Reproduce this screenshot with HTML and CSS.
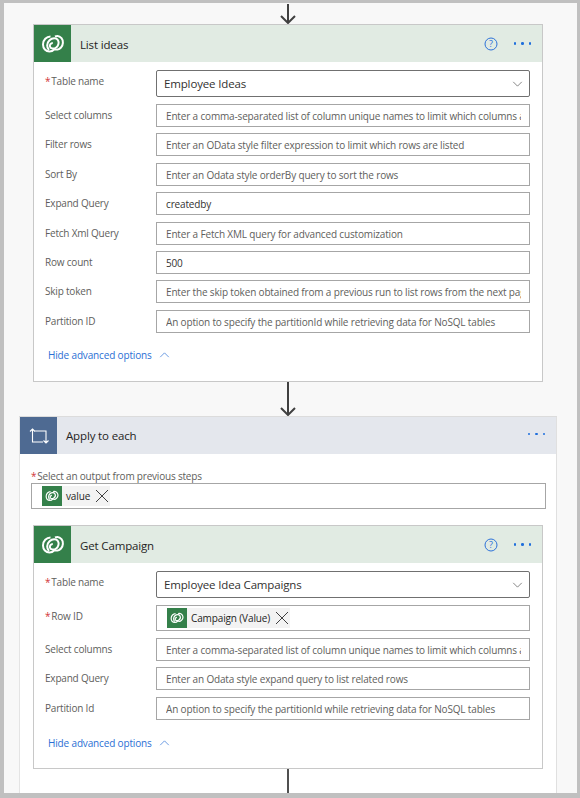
FILE: index.html
```html
<!DOCTYPE html>
<html lang="en">
<head>
    <meta charset="UTF-8">
    <title>List ideas flow</title>
    <link rel="stylesheet" href="styles.css">
</head>
<body>
    <svg class="defs" width="0" height="0">
        <symbol id="dataverse" viewBox="0 0 24 24">
            <path class="dv-line" d="M9.500 4.500C5.500 4.500 2 8 2 12.500c0 4 2.800 7 6.500 7 2.500 0 4-1.300 5-2.300 1.500.8 4.500.5 6.500-1.700 2.300-2.600 2.600-6.700.5-9.300-1.600-2-4.300-2.700-6.500-1.700" />
            <path class="dv-line" d="M8 18c-2.500-2.500-2.500-7 .5-9.800 2.800-2.600 7-2.500 8.500 0 1.300 2.200.5 5.600-1.800 7.300-2.300 1.800-5.500 1.300-6.200-.8-.6-1.800.8-3.700 2.800-3.700" />
        </symbol>
    </svg>

    <div class="frame">
        <div class="connector connector-top">
            <svg class="arrow" viewBox="0 0 20 20"><path class="arrow-line" d="M10 0V19M3 12L10 19L17 12"/></svg>
        </div>

        <section class="card card-list">
            <header class="card-head head-green">
                <span class="head-icon icon-green"><svg class="dv"><use href="#dataverse"/></svg></span>
                <span class="head-title">List ideas</span>
                <svg class="help" viewBox="0 0 14 14"><circle cx="7" cy="7" r="6"/><text x="7" y="10.300" text-anchor="middle">?</text></svg>
                <span class="dots"><i></i><i></i><i></i></span>
            </header>
            <div class="card-body">
                <div class="row row-tall">
                    <label class="lbl"><b>*</b>Table name</label>
                    <div class="field field-select">Employee Ideas<svg class="chev" viewBox="0 0 12 7"><path d="M1 1L6 6L11 1"/></svg></div>
                </div>
                <div class="row"><label class="lbl">Select columns</label><div class="field hint"><span>Enter a comma-separated list of column unique names to limit which columns are listed</span></div></div>
                <div class="row"><label class="lbl">Filter rows</label><div class="field hint"><span>Enter an OData style filter expression to limit which rows are listed</span></div></div>
                <div class="row"><label class="lbl">Sort By</label><div class="field hint"><span>Enter an Odata style orderBy query to sort the rows</span></div></div>
                <div class="row"><label class="lbl">Expand Query</label><div class="field"><span>createdby</span></div></div>
                <div class="row"><label class="lbl">Fetch Xml Query</label><div class="field hint"><span>Enter a Fetch XML query for advanced customization</span></div></div>
                <div class="row"><label class="lbl">Row count</label><div class="field"><span>500</span></div></div>
                <div class="row"><label class="lbl">Skip token</label><div class="field hint"><span>Enter the skip token obtained from a previous run to list rows from the next page</span></div></div>
                <div class="row"><label class="lbl">Partition ID</label><div class="field hint"><span>An option to specify the partitionId while retrieving data for NoSQL tables</span></div></div>
                <a class="adv">Hide advanced options<svg class="chev-up" viewBox="0 0 12 7"><path d="M1 6L6 1L11 6"/></svg></a>
            </div>
        </section>

        <div class="connector connector-mid">
            <svg class="arrow-long" viewBox="0 0 20 34"><path class="arrow-line" d="M10 0V33M3 26L10 33L17 26"/></svg>
        </div>

        <section class="loop">
            <header class="card-head head-slate">
                <span class="head-icon icon-slate">
                    <svg class="loop-icon" viewBox="0 0 20 16"><path d="M3.500 1V14H14M1 3.500L3.500 1L6 3.500M6 3H17V15M14.500 12.500L17 15L19.500 12.500"/></svg>
                </span>
                <span class="head-title">Apply to each</span>
                <span class="dots"><i></i><i></i><i></i></span>
            </header>
            <div class="loop-body">
                <label class="lbl lbl-block"><b>*</b>Select an output from previous steps</label>
                <div class="field field-token">
                    <span class="token">
                        <span class="token-icon"><svg class="dv-small"><use href="#dataverse"/></svg></span>
                        <span class="token-text">value</span>
                        <svg class="token-x" viewBox="0 0 14 14"><path d="M1 1L13 13M13 1L1 13"/></svg>
                    </span>
                </div>

                <section class="card card-get">
                    <header class="card-head head-green">
                        <span class="head-icon icon-green"><svg class="dv"><use href="#dataverse"/></svg></span>
                        <span class="head-title">Get Campaign</span>
                        <svg class="help" viewBox="0 0 14 14"><circle cx="7" cy="7" r="6"/><text x="7" y="10.300" text-anchor="middle">?</text></svg>
                        <span class="dots"><i></i><i></i><i></i></span>
                    </header>
                    <div class="card-body">
                        <div class="row row-tall">
                            <label class="lbl"><b>*</b>Table name</label>
                            <div class="field field-select">Employee Idea Campaigns<svg class="chev" viewBox="0 0 12 7"><path d="M1 1L6 6L11 1"/></svg></div>
                        </div>
                        <div class="row row-id">
                            <label class="lbl"><b>*</b>Row ID</label>
                            <div class="field field-rowid">
                                <span class="token">
                                    <span class="token-icon"><svg class="dv-small"><use href="#dataverse"/></svg></span>
                                    <span class="token-text">Campaign (Value)</span>
                                    <svg class="token-x" viewBox="0 0 14 14"><path d="M1 1L13 13M13 1L1 13"/></svg>
                                </span>
                            </div>
                        </div>
                        <div class="row"><label class="lbl">Select columns</label><div class="field hint"><span>Enter a comma-separated list of column unique names to limit which columns are listed</span></div></div>
                        <div class="row"><label class="lbl">Expand Query</label><div class="field hint"><span>Enter an Odata style expand query to list related rows</span></div></div>
                        <div class="row"><label class="lbl">Partition Id</label><div class="field hint"><span>An option to specify the partitionId while retrieving data for NoSQL tables</span></div></div>
                        <a class="adv">Hide advanced options<svg class="chev-up" viewBox="0 0 12 7"><path d="M1 6L6 1L11 6"/></svg></a>
                    </div>
                </section>

                <div class="connector connector-end"></div>
            </div>
        </section>
    </div>
</body>
</html>
```

FILE: styles.css
```css
* {
    box-sizing: border-box;
}

html, body {
    margin: 0;
    padding: 0;
}

body {
    width: 580px;
    height: 798px;
    overflow: hidden;
    background: #c0c0c0;
    font-family: "Open Sans", "Noto Sans", sans-serif;
    color: #252423;
}

.defs {
    position: absolute;
}

.dv-line {
    fill: none;
    stroke: #fff;
    stroke-width: 2;
}

.frame {
    width: 573px;
    height: 790px;
    margin: 3px 0 0 4px;
    background: #f8f8f8;
    overflow: hidden;
}

/* Connectors */
.connector {
    display: flex;
    justify-content: center;
}

.connector-top {
    width: 568px;
    height: 21px;
    align-items: flex-end;
}

.connector-mid {
    width: 568px;
    height: 34px;
}

.connector-end {
    width: 510px;
    height: 30px;
    margin-left: 13px;
}

.connector-end::before {
    content: "";
    width: 2px;
    height: 30px;
    background: #505050;
}

.arrow {
    width: 20px;
    height: 20px;
}

.arrow-long {
    width: 20px;
    height: 34px;
}

.arrow-line {
    fill: none;
    stroke: #404040;
    stroke-width: 2;
}

/* Cards */
.card {
    width: 510px;
    background: #fff;
    border: 1px solid #c8c8c8;
}

.card-list {
    height: 358px;
    margin-left: 29px;
}

.card-get {
    height: 244px;
    margin-left: 13px;
    margin-top: 16px;
}

.card-get .adv {
    margin-top: 10px;
}

.card-head {
    display: flex;
    align-items: center;
    height: 37px;
}

.head-green {
    background: #e1ebe3;
}

.head-slate {
    background: #e4e7ed;
}

.head-slate .head-title {
    margin-top: -1px;
}

.head-slate .dots {
    margin-top: -3px;
}

.head-icon {
    display: flex;
    align-items: center;
    justify-content: center;
    width: 37px;
    height: 37px;
}

.icon-green {
    background: #34804a;
}

.icon-slate {
    background: #4e6a92;
}

.dv {
    width: 24px;
    height: 24px;
}

.loop-icon {
    width: 20px;
    height: 16px;
    fill: none;
    stroke: #fff;
    stroke-width: 1.100;
}

.head-title {
    flex: 1;
    margin: 2px 0 0 9px;
    font-size: 11.500px;
    letter-spacing: -0.150px;
}

.help {
    width: 14px;
    height: 14px;
    margin-right: 16px;
    fill: none;
    stroke: #2d72d9;
}

.help text {
    font-size: 9px;
    fill: #2d72d9;
    stroke: none;
}

.dots {
    display: flex;
    gap: 5px;
    margin-right: 11px;
}

.dots i {
    width: 2.500px;
    height: 2.500px;
    border-radius: 50%;
    background: #1f6fdc;
}

.card-body {
    padding: 8px 12px 0 11px;
}

/* Form rows */
.row {
    display: flex;
    align-items: flex-start;
    height: 29.400px;
}

.row-tall {
    height: 34px;
}

.row-id {
    height: 33px;
}

.lbl {
    width: 111px;
    padding-top: 4px;
    font-size: 10px;
    letter-spacing: -0.200px;
    color: #605e5c;
    white-space: nowrap;
}

.lbl b {
    color: #d13438;
    font-weight: 400;
    margin-right: 1px;
}

.lbl-block {
    display: block;
    width: auto;
    padding: 0 0 0 11px;
    height: 14px;
    line-height: 14px;
}

.field {
    width: 374px;
    height: 23px;
    padding: 0 8px 0 9px;
    border: 1px solid #a6a6a6;
    background: #fff;
    font-size: 10px;
    letter-spacing: -0.160px;
    line-height: 22px;
    color: #323130;
    white-space: nowrap;
}

.field > span {
    display: block;
    overflow: hidden;
}

.hint {
    color: #605e5c;
}

.field-select {
    display: flex;
    align-items: center;
    justify-content: space-between;
    height: 27px;
    padding: 0 6px 0 7px;
    border-color: #707070;
    border-radius: 2px;
    font-size: 11.500px;
    letter-spacing: -0.150px;
}

.chev {
    width: 11px;
    height: 6px;
    fill: none;
    stroke: #505050;
    stroke-width: 0.800;
}

.field-rowid {
    height: 26px;
    padding: 2px 10px;
    line-height: normal;
}

.field-token {
    width: 515px;
    height: 26px;
    margin: 0 0 0 11px;
    padding: 2px 10px;
    line-height: normal;
}

.field > .token {
    display: inline-flex;
    align-items: center;
    height: 20px;
    background: #f3f3f3;
    overflow: visible;
}

.token-icon {
    display: flex;
    align-items: center;
    justify-content: center;
    width: 20px;
    height: 20px;
    background: #34804a;
}

.dv-small {
    width: 14px;
    height: 14px;
}

.token-text {
    margin: 0 5px 0 4px;
    font-size: 10px;
    letter-spacing: -0.130px;
    color: #252423;
}

.token-x {
    width: 14px;
    height: 14px;
    margin-right: 1px;
    fill: none;
    stroke: #404040;
}

.adv {
    display: flex;
    align-items: center;
    gap: 7px;
    margin: 9px 0 0 3px;
    font-size: 10px;
    letter-spacing: -0.150px;
    color: #2b6fd4;
}

.chev-up {
    width: 11px;
    height: 6px;
    fill: none;
    stroke: #2b6fd4;
    stroke-width: 0.800;
}

/* Apply to each */
.loop {
    width: 538px;
    height: 400px;
    margin: 1px 0 0 15px;
    border-left: 1px solid #e4e4e4;
    border-right: 1px solid #e0e0e0;
    background: #fff;
    box-shadow: 0 -1px 0 #dcdcdc;
}

.loop-body {
    padding-top: 15px;
}
```
